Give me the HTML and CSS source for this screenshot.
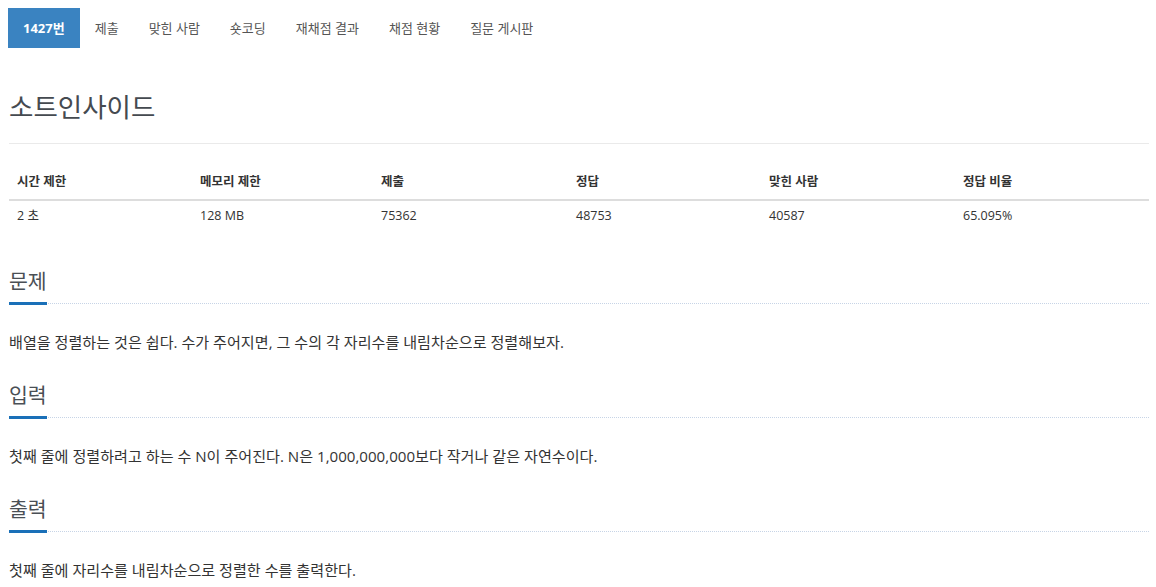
FILE: index.html
```html
<!DOCTYPE html>
<html lang="ko">
<head>
<meta charset="utf-8">
<title>소트인사이드</title>
<link rel="stylesheet" href="styles.css">
</head>
<body>
<ul class="tabs">
  <li class="tab active">1427번</li>
  <li class="tab">제출</li>
  <li class="tab">맞힌 사람</li>
  <li class="tab">숏코딩</li>
  <li class="tab">재채점 결과</li>
  <li class="tab">채점 현황</li>
  <li class="tab">질문 게시판</li>
</ul>
<main class="container">
  <h1 class="title">소트인사이드</h1>
  <div class="rule"></div>
  <table class="info">
    <colgroup>
      <col class="c1"><col class="c2"><col class="c3"><col class="c4"><col class="c5"><col class="c6">
    </colgroup>
    <thead>
      <tr><th>시간 제한</th><th>메모리 제한</th><th>제출</th><th>정답</th><th>맞힌 사람</th><th>정답 비율</th></tr>
    </thead>
    <tbody>
      <tr><td>2 초</td><td>128 MB</td><td>75362</td><td>48753</td><td>40587</td><td>65.095%</td></tr>
    </tbody>
  </table>
  <section class="block">
    <h2 class="headline"><span>문제</span></h2>
    <p class="text">배열을 정렬하는 것은 쉽다. 수가 주어지면, 그 수의 각 자리수를 내림차순으로 정렬해보자.</p>
  </section>
  <section class="block">
    <h2 class="headline"><span>입력</span></h2>
    <p class="text">첫째 줄에 정렬하려고 하는 수 N이 주어진다. N은 1,000,000,000보다 작거나 같은 자연수이다.</p>
  </section>
  <section class="block">
    <h2 class="headline"><span>출력</span></h2>
    <p class="text">첫째 줄에 자리수를 내림차순으로 정렬한 수를 출력한다.</p>
  </section>
</main>
</body>
</html>
```
FILE: styles.css
```css
html, body {
  margin: 0;
  padding: 0;
  background: #fff;
}
body {
  font-family: "Open Sans", "Noto Sans CJK KR", sans-serif;
  color: #333;
}
.tabs {
  list-style: none;
  margin: 8px 0 0 8px;
  padding: 0;
  display: flex;
}
.tab {
  font-size: 13px;
  line-height: 20px;
  padding: 10px 15px;
  color: #555;
}
.tab.active {
  background: #3a83c1;
  color: #fff;
  font-weight: 700;
}
.container {
  width: 1140px;
  margin-left: 9px;
}
.title {
  margin: 42px 0 0 0;
  font-size: 26.5px;
  line-height: 34px;
  font-weight: 400;
  color: #454a50;
}
.rule {
  margin-top: 19px;
  height: 1px;
  background: #eaeaea;
}
.info {
  margin-top: 20px;
  width: 1140px;
  table-layout: fixed;
  border-collapse: collapse;
  font-size: 12.5px;
  line-height: 20px;
}
.c1 { width: 183px; }
.c2 { width: 181px; }
.c3 { width: 195px; }
.c4 { width: 193px; }
.c5 { width: 194px; }
.c6 { width: 194px; }
.info th {
  text-align: left;
  font-weight: 700;
  padding: 8px 8px 7px 8px;
  border-bottom: 2px solid #ddd;
  color: #333;
}
.info td {
  padding: 5px 8px 5px 8px;
  color: #333;
}
.block {
  margin-top: 37px;
}
.block + .block {
  margin-top: 30px;
}
.headline {
  margin: 0;
  display: flex;
  border-bottom: 1px dotted #c7d4e6;
  font-weight: 400;
}
.headline span {
  display: block;
  font-size: 20.5px;
  line-height: 27px;
  color: #4a4f55;
  padding-bottom: 7px;
  border-bottom: 3px solid #1a70b8;
  margin-bottom: -2px;
}
.text {
  margin: 28px 0 0 0;
  font-size: 15.1px;
  line-height: 20px;
  color: #333;
}
```
